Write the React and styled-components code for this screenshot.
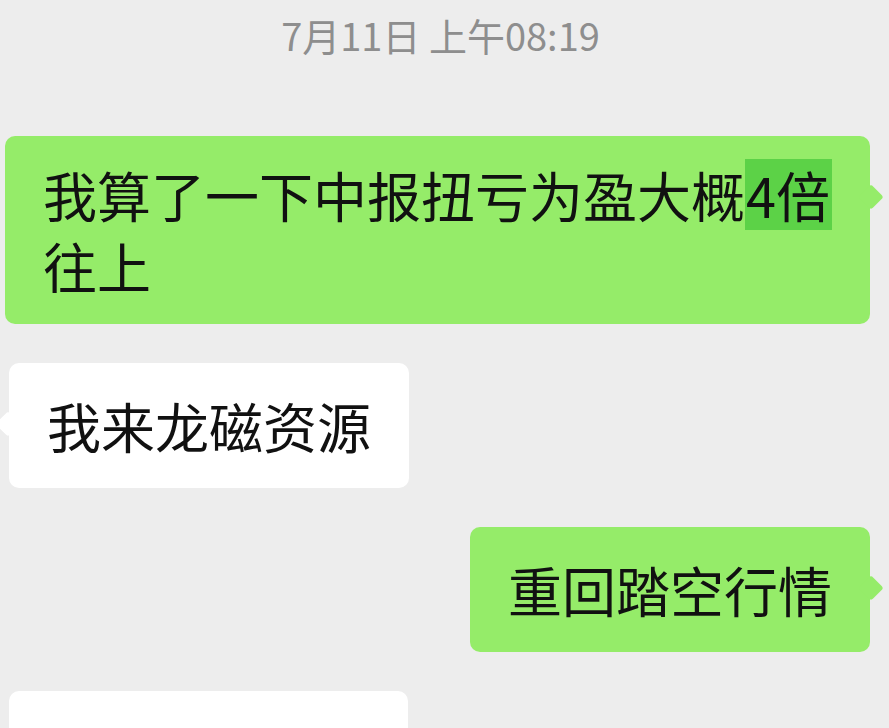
import React from "react";
import styled, { createGlobalStyle, css } from "styled-components";

const GlobalStyle = createGlobalStyle`
  html, body {
    margin: 0;
    padding: 0;
    background: #ededed;
    overflow: hidden;
  }
  body {
    font-family: "Noto Sans CJK SC", "Noto Sans", sans-serif;
  }
`;

const StyledChat = styled.main`
  display: flex;
  flex-direction: column;
  gap: 39px;
  width: 889px;
  height: 728px;
  box-sizing: border-box;
  padding: 10px 19px 0 5px;
  overflow: hidden;
`;

const StyledTime = styled.div`
  margin-bottom: 37px;
  padding-left: 6px;
  text-align: center;
  color: #8e8e8e;
  font-size: 38px;
  line-height: 50px;
`;

const StyledRow = styled.div`
  display: flex;
  justify-content: ${({ $mine }) => ($mine ? "flex-end" : "flex-start")};
  padding-left: ${({ $mine }) => ($mine ? "0" : "4px")};
`;

const StyledBubble = styled.div`
  position: relative;
  max-width: 865px;
  min-width: ${({ $w }) => ($w ? `${$w}px` : "0")};
  min-height: 125px;
  box-sizing: border-box;
  padding: ${({ $pad }) => $pad}px 38px;
  border-radius: 10px;
  color: #111;
  font-size: 54px;
  line-height: 71px;
  background: ${({ $mine }) => ($mine ? "#95ec69" : "#ffffff")};
  &:after {
    content: "";
    position: absolute;
    top: 52px;
    width: 18px;
    height: 18px;
    border-radius: 3px;
    background: inherit;
    transform: rotate(45deg);
    ${({ $mine }) =>
      $mine
        ? css`
            right: -10px;
          `
        : css`
            left: -10px;
          `}
  }
`;

const StyledMark = styled.span`
  display: inline-block;
  padding: 0 2px 0 1px;
  background: #5cd247;
`;

const App = () => {
  return (
    <>
      <GlobalStyle />
      <StyledChat>
        <StyledTime>7月11日 上午08:19</StyledTime>

        <StyledRow $mine>
          <StyledBubble $mine $pad={23}>
            我算了一下中报扭亏为盈大概<StyledMark>4倍</StyledMark>往上
          </StyledBubble>
        </StyledRow>

        <StyledRow>
          <StyledBubble $pad={27}>我来龙磁资源</StyledBubble>
        </StyledRow>

        <StyledRow $mine>
          <StyledBubble $mine $pad={27}>
            重回踏空行情
          </StyledBubble>
        </StyledRow>

        <StyledRow>
          <StyledBubble $pad={27} $w={399} />
        </StyledRow>
      </StyledChat>
    </>
  );
};

export default App;
